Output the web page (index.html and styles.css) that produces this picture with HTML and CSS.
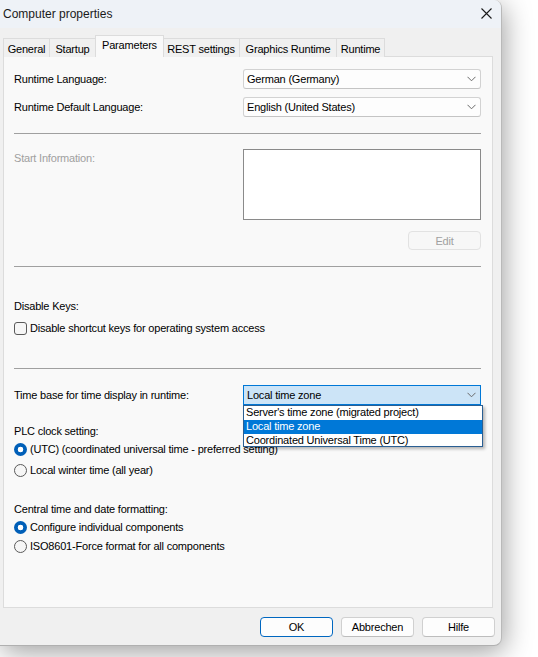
FILE: index.html
```html
<!DOCTYPE html>
<html>
<head>
<meta charset="utf-8">
<link rel="stylesheet" href="styles.css">
</head>
<body>
<div class="window">
  <div class="titlebar">
    <span class="title">Computer properties</span>
    <svg class="close" width="11" height="11" viewBox="0 0 11 11"><path d="M0.5 0.5 L10.5 10.5 M10.5 0.5 L0.5 10.5" stroke="#1a1a1a" stroke-width="1.1" fill="none"/></svg>
  </div>
  <div class="tabs">
    <div class="tab t-general">General</div>
    <div class="tab t-startup">Startup</div>
    <div class="tab selected t-params">Parameters</div>
    <div class="tab t-rest">REST settings</div>
    <div class="tab t-graphics">Graphics Runtime</div>
    <div class="tab t-runtime">Runtime</div>
  </div>
  <div class="panel">
    <div class="row r-lang">
      <span class="label">Runtime Language:</span>
      <div class="combo"><span>German (Germany)</span><svg class="chev" width="9" height="6" viewBox="0 0 9 6"><path d="M0.5 0.8 L4.5 4.8 L8.5 0.8" stroke="#6a6a6a" stroke-width="1" fill="none"/></svg></div>
    </div>
    <div class="row r-deflang">
      <span class="label">Runtime Default Language:</span>
      <div class="combo"><span>English (United States)</span><svg class="chev" width="9" height="6" viewBox="0 0 9 6"><path d="M0.5 0.8 L4.5 4.8 L8.5 0.8" stroke="#6a6a6a" stroke-width="1" fill="none"/></svg></div>
    </div>
    <div class="sep s1"></div>
    <div class="row r-start">
      <span class="label disabled">Start Information:</span>
      <div class="textbox"></div>
    </div>
    <div class="row r-edit">
      <div class="btn btn-edit">Edit</div>
    </div>
    <div class="sep s2"></div>
    <div class="line l-keys">Disable Keys:</div>
    <div class="line l-check"><span class="checkbox"></span><span>Disable shortcut keys for operating system access</span></div>
    <div class="sep s3"></div>
    <div class="row r-time">
      <span class="label">Time base for time display in runtime:</span>
      <div class="combo focused"><span>Local time zone</span><svg class="chev" width="9" height="6" viewBox="0 0 9 6"><path d="M0.5 0.8 L4.5 4.8 L8.5 0.8" stroke="#6a6a6a" stroke-width="1" fill="none"/></svg>
        <div class="dropdown">
          <div class="item">Server's time zone (migrated project)</div>
          <div class="item hl">Local time zone</div>
          <div class="item">Coordinated Universal Time (UTC)</div>
        </div>
      </div>
    </div>
    <div class="line l-plc">PLC clock setting:</div>
    <div class="line l-r1"><span class="radio on"></span><span>(UTC) (coordinated universal time - preferred setting)</span></div>
    <div class="line l-r2"><span class="radio"></span><span>Local winter time (all year)</span></div>
    <div class="line l-central">Central time and date formatting:</div>
    <div class="line l-r3"><span class="radio on"></span><span>Configure individual components</span></div>
    <div class="line l-r4"><span class="radio"></span><span>ISO8601-Force format for all components</span></div>
  </div>
  <div class="buttons">
    <div class="btn btn-ok">OK</div>
    <div class="btn">Abbrechen</div>
    <div class="btn">Hilfe</div>
  </div>
</div>
</body>
</html>
```
FILE: styles.css
```css
* { box-sizing: border-box; }
html, body { margin: 0; padding: 0; }
body {
  width: 538px;
  height: 657px;
  overflow: hidden;
  background: #ffffff;
  font-family: "Liberation Sans", Arial, sans-serif;
  font-size: 11px;
  letter-spacing: -0.2px;
  color: #000;
}
.window {
  width: 502px;
  height: 646px;
  background: #f0f0f0;
  border-right: 1px solid #b9b9b9;
  border-bottom: 1px solid #b0b0b0;
  border-radius: 0 8px 8px 0;
  box-shadow: 2px 6px 28px rgba(0,0,0,0.38);
  display: flex;
  flex-direction: column;
  overflow: hidden;
}
.titlebar {
  height: 28px;
  background: #eef2f7;
  display: flex;
  align-items: center;
  justify-content: space-between;
  padding: 0 9px 0 3px;
  flex: none;
}
.title { font-size: 12px; letter-spacing: 0; color: #1a1a1a; margin-top: -1px; }
.close { margin-top: -1px; }
.tabs {
  display: flex;
  align-items: flex-end;
  height: 29px;
  padding-left: 3px;
  flex: none;
  position: relative;
  z-index: 2;
  margin-bottom: -1px;
}
.tab {
  height: 19px;
  border: 1px solid #dcdcdc;
  border-bottom: none;
  background: #f0f0f0;
  display: flex;
  align-items: center;
  justify-content: center;
  margin-left: -1px;
  padding-top: 2px;
}
.tab:first-child { margin-left: 0; }
.tab.selected {
  height: 22px;
  background: #f9f9f9;
  border-color: #dcdcdc;
  padding-top: 0;
  padding-bottom: 3px;
  margin: 0 -1px;
  position: relative;
  z-index: 3;
}
.t-general { width: 47px; }
.t-startup { width: 47px; }
.t-params { width: 69px; }
.t-rest { width: 78px; }
.t-graphics { width: 98px; }
.t-runtime { width: 49px; }
.panel {
  margin-left: 3px;
  width: 490px;
  height: 552px;
  background: #f9f9f9;
  border: 1px solid #dcdcdc;
  padding: 0 11px 0 10px;
  flex: none;
  position: relative;
  z-index: 1;
}
.row { display: flex; align-items: center; }
.label { width: 229px; flex: none; }
.disabled { color: #a0a0a0; }
.combo {
  position: relative;
  width: 238px;
  height: 20px;
  background: #fdfdfd;
  border: 1px solid #d2d2d2;
  border-bottom-color: #c4c4c4;
  border-radius: 3px;
  display: flex;
  align-items: center;
  justify-content: space-between;
  padding: 0 4px 0 3px;
}
.combo.focused {
  background: #cce4f7;
  border: 1px solid #0078d7;
  border-radius: 0;
}
.chev { flex: none; }
.r-lang { margin-top: 12px; }
.r-deflang { margin-top: 8px; }
.sep { height: 1px; background: #a0a0a0; width: 467px; }
.s1 { margin-top: 16px; }
.r-start { margin-top: 15px; align-items: flex-start; }
.r-start .label { line-height: 18px; }
.textbox {
  width: 238px;
  height: 71px;
  background: #fff;
  border: 1px solid #8a8a8a;
}
.r-edit { margin-top: 11px; justify-content: flex-end; width: 467px; }
.btn {
  width: 73px;
  height: 20px;
  background: #fdfdfd;
  border: 1px solid #d0d0d0;
  border-bottom-color: #bdbdbd;
  border-radius: 4px;
  display: flex;
  align-items: center;
  justify-content: center;
}
.btn-edit {
  height: 19px;
  background: #f7f7f7;
  border-color: #e2e2e2;
  color: #a0a0a0;
}
.s2 { margin-top: 16px; }
.line { display: flex; align-items: center; height: 16px; }
.l-keys { margin-top: 31px; }
.l-check { margin-top: 6px; }
.checkbox {
  width: 13px;
  height: 13px;
  border: 1px solid #5a5a5a;
  border-radius: 3px;
  background: #f6f6f6;
  margin-right: 3px;
  flex: none;
}
.s3 { margin-top: 32px; }
.r-time { margin-top: 16px; }
.dropdown {
  position: absolute;
  left: -1px;
  top: 19px;
  width: 240px;
  height: 42px;
  background: #fff;
  border: 1px solid #2a5f93;
  box-shadow: 2px 2px 3px rgba(0,0,0,0.28);
  z-index: 10;
}
.item { height: 13.5px; line-height: 13px; padding-left: 2px; white-space: nowrap; }
.item.hl { background: #0078d7; color: #fff; height: 14px; }
.l-plc { margin-top: 18px; }
.l-r1 { margin-top: 2px; }
.l-r2 { margin-top: 5px; }
.l-central { margin-top: 23px; }
.l-r3 { margin-top: 2px; }
.l-r4 { margin-top: 3px; }
.radio {
  width: 13px;
  height: 13px;
  border-radius: 50%;
  border: 1px solid #5a5a5a;
  background: #f6f6f6;
  margin-right: 3px;
  flex: none;
}
.radio.on {
  border: none;
  background: radial-gradient(circle, #ffffff 0 2.6px, #005fb8 3.1px);
}
.buttons {
  display: flex;
  justify-content: flex-end;
  gap: 8px;
  padding-right: 6px;
  margin-top: 9px;
  flex: none;
}
.btn-ok { border-color: #0067c0; }
```
